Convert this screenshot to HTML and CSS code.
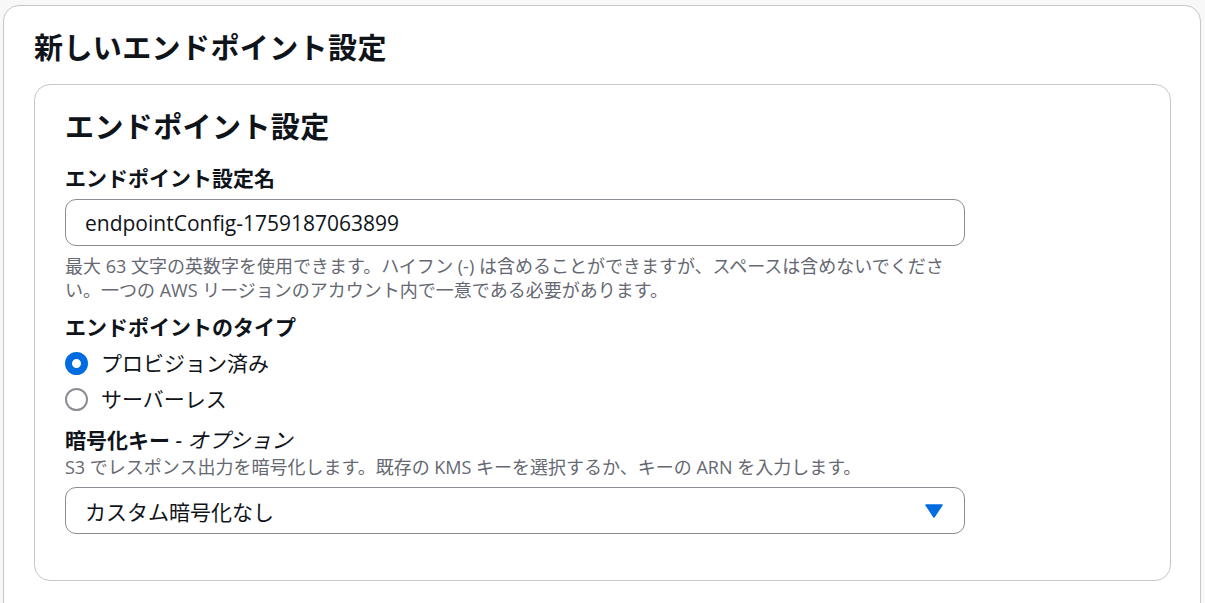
FILE: index.html
```html
<!DOCTYPE html>
<html lang="ja">
<head>
<meta charset="utf-8">
<link rel="stylesheet" href="styles.css">
</head>
<body>
<div class="page">
  <div class="outer">
    <h1 class="title">新しいエンドポイント設定</h1>
    <div class="card">
      <h2 class="card-title">エンドポイント設定</h2>
      <div class="label label-name">エンドポイント設定名</div>
      <div class="input">endpointConfig-1759187063899</div>
      <div class="desc desc-name">最大 63 文字の英数字を使用できます。ハイフン (-) は含めることができますが、スペースは含めないでください。一つの AWS リージョンのアカウント内で一意である必要があります。</div>
      <div class="label label-type">エンドポイントのタイプ</div>
      <div class="radios">
        <div class="radio-row"><span class="radio checked"></span><span class="radio-label">プロビジョン済み</span></div>
        <div class="radio-row"><span class="radio"></span><span class="radio-label">サーバーレス</span></div>
      </div>
      <div class="label label-key">暗号化キー <span class="opt">- オプション</span></div>
      <div class="desc desc-key">S3 でレスポンス出力を暗号化します。既存の KMS キーを選択するか、キーの ARN を入力します。</div>
      <div class="select">
        <span class="select-value">カスタム暗号化なし</span>
        <svg class="caret" width="18" height="14" viewBox="0 0 18 14"><path d="M1 1 H17 L9 13 Z" fill="#006ce0" stroke="#006ce0" stroke-width="1.5" stroke-linejoin="round"/></svg>
      </div>
    </div>
  </div>
</div>
</body>
</html>
```

FILE: styles.css
```css
* { box-sizing: border-box; }
html, body {
  margin: 0;
  padding: 0;
  background: #f8f8f8;
  font-family: "Open Sans", "Noto Sans CJK JP", sans-serif;
  color: #0f141a;
  overflow: hidden;
}
.page {
  padding: 5px 4px 0 3px;
  height: 603px;
  overflow: hidden;
}
.outer {
  background: #ffffff;
  border: 1px solid #c6c6cd;
  border-radius: 16px;
  height: 640px;
  padding: 22px 29px 0 30px;
}
.title {
  margin: 0;
  font-size: 29px;
  line-height: 40px;
  font-weight: 700;
  letter-spacing: 0.4px;
}
.card {
  margin-top: 16px;
  border: 1px solid #c6c6cd;
  border-radius: 16px;
  padding: 22px 30px 45px 30px;
  display: flex;
  flex-direction: column;
  height: 497px;
}
.card-title {
  margin: 0;
  font-size: 29px;
  line-height: 40px;
  font-weight: 700;
  letter-spacing: 0.4px;
}
.label {
  font-size: 21px;
  line-height: 28px;
  font-weight: 700;
}
.label-name { margin-top: 17px; }
.label-type { margin-top: 11px; }
.label-key { margin-top: 9px; }
.opt {
  font-weight: 400;
  font-style: italic;
}
.input, .select {
  width: 900px;
  height: 47px;
  border: 1px solid #8c8c94;
  border-radius: 11px;
  padding: 0 19px;
  display: flex;
  align-items: center;
  font-size: 21px;
}
.input { margin-top: 7px; }
.desc {
  width: 900px;
  font-size: 18px;
  line-height: 24px;
  color: #656871;
}
.desc-name { margin-top: 8px; }
.desc-key { margin-top: 1px; }
.radios {
  margin-top: 4px;
  display: flex;
  flex-direction: column;
}
.radio-row {
  height: 36px;
  display: flex;
  align-items: center;
  gap: 13px;
}
.radio {
  width: 23px;
  height: 23px;
  border-radius: 50%;
  border: 2px solid #8c8c94;
  background: #fff;
  flex: none;
}
.radio.checked {
  border: 7px solid #006ce0;
}
.radio-label {
  font-size: 21px;
  line-height: 28px;
}
.select {
  margin-top: 8px;
  justify-content: space-between;
  padding-right: 21px;
}
.caret { display: block; }
```
